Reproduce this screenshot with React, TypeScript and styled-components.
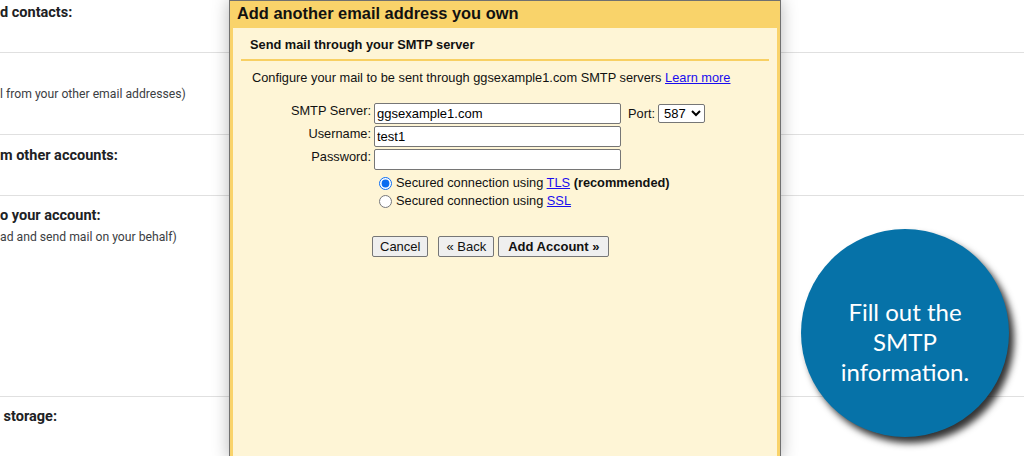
import styled, { createGlobalStyle } from "styled-components";

const GlobalStyle = createGlobalStyle`
  html, body {
    margin: 0;
    padding: 0;
    background: #ffffff;
    overflow: hidden;
  }
  #root {
    width: 1024px;
    height: 456px;
  }
`;

const rows = [
  { height: 53, pad: 4, title: "d contacts:" },
  { height: 82, pad: 33, note: "l from your other email addresses)" },
  { height: 61, pad: 12, title: "m other accounts:" },
  { height: 201, pad: 11, title: "o your account:", note: "ad and send mail on your behalf)" },
  { height: 60, pad: 11, title: " storage:" },
];

export default function App() {
  return (
    <Page>
      <GlobalStyle />
      <Settings>
        {rows.map((r, i) => (
          <SettingRow key={i} $height={r.height} $pad={r.pad}>
            {r.title && <RowTitle>{r.title}</RowTitle>}
            {r.note && <RowNote>{r.note}</RowNote>}
          </SettingRow>
        ))}
      </Settings>

      <Dialog>
        <TitleBar>Add another email address you own</TitleBar>
        <Body>
          <SectionHead>Send mail through your SMTP server</SectionHead>
          <Rule />
          <Content>
            <Intro>
              Configure your mail to be sent through ggsexample1.com SMTP servers{" "}
              <Link href="#">Learn more</Link>
            </Intro>
            <Form>
              <Label>SMTP Server:</Label>
              <TextInput defaultValue="ggsexample1.com" />
              <PortCell>
                <span>Port:</span>
                <PortSelect defaultValue="587">
                  <option>587</option>
                  <option>465</option>
                  <option>25</option>
                </PortSelect>
              </PortCell>

              <Label>Username:</Label>
              <TextInput defaultValue="test1" />
              <span />

              <Label>Password:</Label>
              <TextInput type="password" />
              <span />

              <span />
              <Radios>
                <RadioRow>
                  <Radio type="radio" name="sec" defaultChecked />
                  <span>
                    Secured connection using <Link href="#">TLS</Link> <b>(recommended)</b>
                  </span>
                </RadioRow>
                <RadioRow>
                  <Radio type="radio" name="sec" />
                  <span>
                    Secured connection using <Link href="#">SSL</Link>
                  </span>
                </RadioRow>
              </Radios>

              <span />
              <Buttons>
                <Button>Cancel</Button>
                <Button $gap={10}>« Back</Button>
                <Button $gap={4} $pad={9} $bold>Add Account »</Button>
              </Buttons>
            </Form>
          </Content>
        </Body>
      </Dialog>

      <Callout>
        <CalloutText>
          Fill out the
          <br />
          SMTP
          <br />
          information.
        </CalloutText>
      </Callout>
    </Page>
  );
}

const Page = styled.div`
  position: relative;
  width: 1024px;
  height: 456px;
  overflow: hidden;
  background: #ffffff;
`;

const Settings = styled.div`
  display: flex;
  flex-direction: column;
`;

const SettingRow = styled.div<{ $height: number; $pad: number }>`
  height: ${(p) => p.$height}px;
  padding-top: ${(p) => p.$pad}px;
  box-sizing: border-box;
  border-bottom: 1px solid #e0e0e0;
  display: flex;
  flex-direction: column;
  gap: 4px;
  white-space: pre;
`;

const RowTitle = styled.div`
  font-family: Roboto, "Open Sans", sans-serif;
  font-weight: 700;
  font-size: 14.5px;
  line-height: 18px;
  color: #202124;
`;

const RowNote = styled.div`
  font-family: Roboto, "Open Sans", sans-serif;
  font-size: 12.2px;
  line-height: 16px;
  color: #3c4043;
`;

const Dialog = styled.div`
  position: absolute;
  left: 229px;
  top: 0;
  width: 552px;
  height: 460px;
  box-sizing: border-box;
  border: 1px solid #707070;
  background: #f9d36a;
  padding: 0 3px 3px;
  display: flex;
  flex-direction: column;
  box-shadow: 0 0 16px rgba(0, 0, 0, 0.28);
  font-family: "Liberation Sans", Arial, sans-serif;
  font-size: 12.8px;
  color: #111;
`;

const TitleBar = styled.div`
  height: 27px;
  padding-left: 4px;
  box-sizing: border-box;
  font-weight: 700;
  font-size: 16.4px;
  line-height: 25px;
  color: #111;
`;

const Body = styled.div`
  flex: 1;
  background: #fef5d6;
  display: flex;
  flex-direction: column;
`;

const SectionHead = styled.div`
  height: 31px;
  box-sizing: border-box;
  padding: 9px 0 0 17px;
  font-weight: 700;
  line-height: 15px;
`;

const Rule = styled.div`
  height: 2px;
  margin: 0 8px;
  background: #f8d063;
`;

const Content = styled.div`
  padding: 9px 0 0 19px;
`;

const Intro = styled.div`
  line-height: 16px;
  margin-bottom: 17px;
`;

const Link = styled.a`
  color: #1a0dee;
  text-decoration: underline;
`;

const Form = styled.div`
  display: grid;
  grid-template-columns: 119px 247px auto;
  column-gap: 3px;
  row-gap: 2px;
  align-items: start;
`;

const Label = styled.div`
  text-align: right;
  line-height: 16px;
`;

const TextInput = styled.input`
  width: 247px;
  height: 21px;
  box-sizing: border-box;
  margin: 0;
  padding: 1px 2px;
  border: 1px solid #767676;
  border-radius: 2px;
  background: #fff;
  font-family: "Liberation Sans", Arial, sans-serif;
  font-size: 13px;
  color: #000;
`;

const PortCell = styled.div`
  display: flex;
  align-items: center;
  gap: 3px;
  margin-left: 4px;
  height: 21px;
  line-height: 16px;
`;

const PortSelect = styled.select`
  width: 47px;
  height: 19px;
  padding: 0 0 0 1px;
  margin: 0;
  border: 1px solid #767676;
  border-radius: 2px;
  background: #fff;
  font-family: "Liberation Sans", Arial, sans-serif;
  font-size: 13px;
  color: #000;
`;

const Radios = styled.div`
  grid-column: 2 / span 2;
  display: flex;
  flex-direction: column;
  margin-top: 2px;
  white-space: nowrap;
`;

const RadioRow = styled.label`
  display: flex;
  align-items: center;
  height: 18px;
  gap: 4px;
  line-height: 16px;
`;

const Radio = styled.input`
  width: 13px;
  height: 13px;
  margin: 0 0 0 5px;
  accent-color: #0b6cf0;
`;

const Buttons = styled.div`
  grid-column: 2 / span 2;
  display: flex;
  margin: 24px 0 0 -2px;
`;

const Button = styled.button<{ $gap?: number; $pad?: number; $bold?: boolean }>`
  height: 21px;
  margin-left: ${(p) => p.$gap ?? 0}px;
  padding: 0 ${(p) => p.$pad ?? 7}px;
  border: 1px solid #767676;
  border-radius: 2px;
  background: #efefef;
  font-family: "Liberation Sans", Arial, sans-serif;
  font-size: 13px;
  font-weight: ${(p) => (p.$bold ? 700 : 400)};
  color: #111;
  white-space: nowrap;
`;

const Callout = styled.div`
  position: absolute;
  left: 801px;
  top: 229px;
  width: 208px;
  height: 208px;
  border-radius: 50%;
  background: #0672a8;
  box-shadow: 5px 6px 7px rgba(0, 0, 0, 0.8);
  display: flex;
  align-items: center;
  justify-content: center;
`;

const CalloutText = styled.div`
  font-family: Lato, "Open Sans", sans-serif;
  font-size: 24px;
  line-height: 30px;
  color: #ffffff;
  text-align: center;
  margin-top: 18px;
`;
